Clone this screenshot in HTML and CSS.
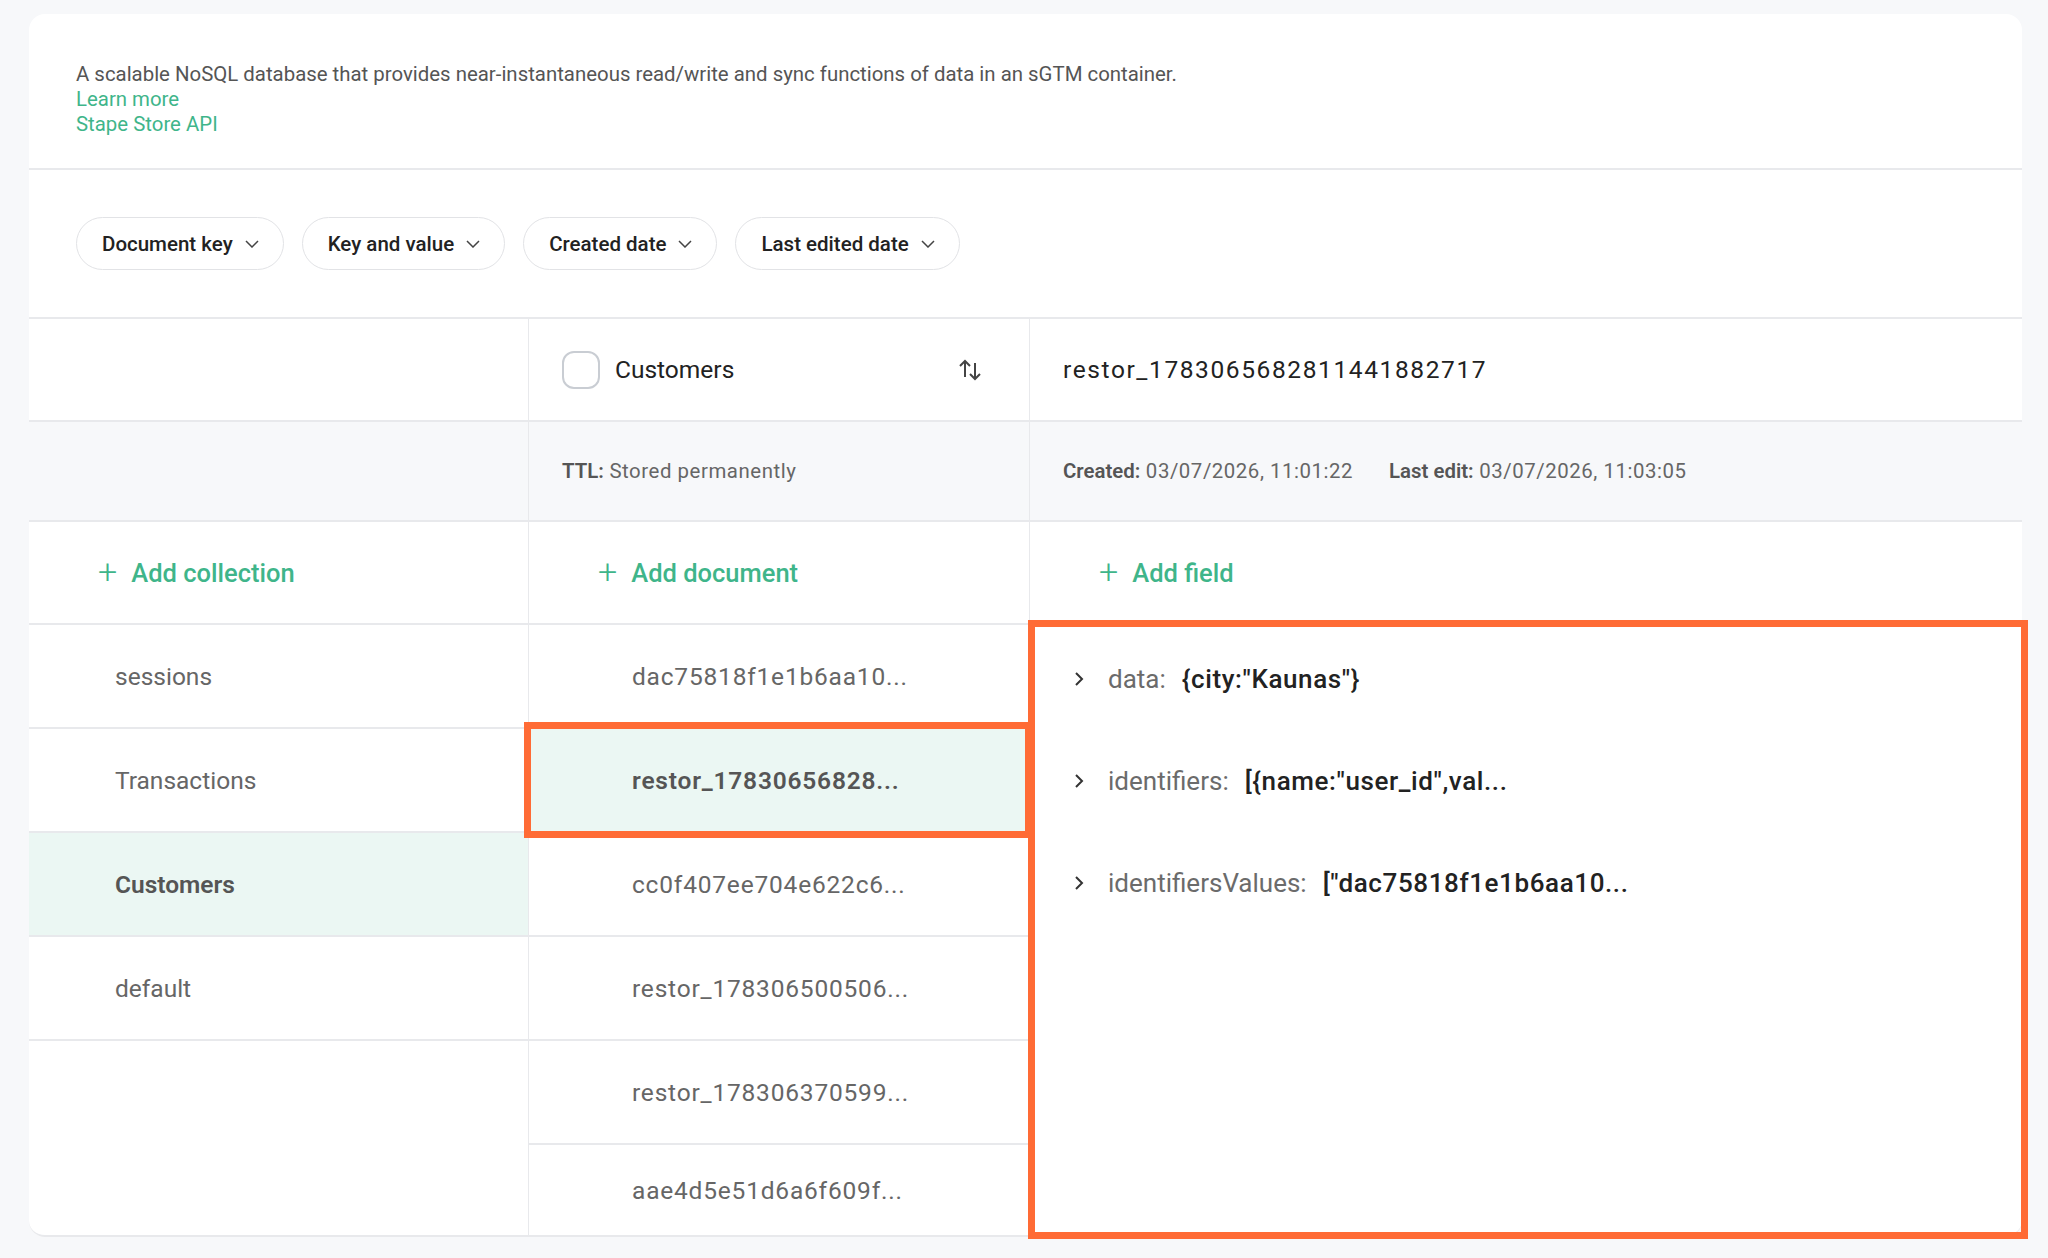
FILE: index.html
```html
<!DOCTYPE html>
<html>
<head>
    <title>Stape Store</title>
    <link rel="stylesheet" href="styles.css">
</head>
<body>
    <div class="card">
        <div class="intro">
            <p>A scalable NoSQL database that provides near-instantaneous read/write and sync functions of data in an sGTM container.</p>
            <a href="#">Learn more</a>
            <a href="#">Stape Store API</a>
        </div>

        <div class="filters">
            <button class="chip">Document key <svg class="caret" viewBox="0 0 14 8"><path d="M1 1l6 6 6-6"/></svg></button>
            <button class="chip">Key and value <svg class="caret" viewBox="0 0 14 8"><path d="M1 1l6 6 6-6"/></svg></button>
            <button class="chip">Created date <svg class="caret" viewBox="0 0 14 8"><path d="M1 1l6 6 6-6"/></svg></button>
            <button class="chip">Last edited date <svg class="caret" viewBox="0 0 14 8"><path d="M1 1l6 6 6-6"/></svg></button>
        </div>

        <div class="store">
            <div class="row head">
                <div class="cell"></div>
                <div class="cell">
                    <span class="check"></span>
                    <span class="coll-name">Customers</span>
                    <svg class="sort" viewBox="0 0 26 26"><path d="M8 20V4M3 9l5-5 5 5M18 6v16M13 17l5 5 5-5"/></svg>
                </div>
                <div class="cell doc-key">restor_1783065682811441882717</div>
            </div>

            <div class="row meta">
                <div class="cell"></div>
                <div class="cell"><b>TTL:</b>&nbsp;Stored permanently</div>
                <div class="cell"><b>Created:</b>&nbsp;03/07/2026, 11:01:22 <b class="gap">Last edit:</b>&nbsp;03/07/2026, 11:03:05</div>
            </div>

            <div class="row add">
                <div class="cell"><a href="#" class="add-link"><span class="plus">+</span>Add collection</a></div>
                <div class="cell"><a href="#" class="add-link"><span class="plus">+</span>Add document</a></div>
                <div class="cell"><a href="#" class="add-link"><span class="plus">+</span>Add field</a></div>
            </div>

            <div class="body">
                <ul class="list collections">
                    <li>sessions</li>
                    <li>Transactions</li>
                    <li class="active">Customers</li>
                    <li>default</li>
                </ul>
                <ul class="list documents">
                    <li>dac75818f1e1b6aa10...</li>
                    <li class="active">restor_17830656828...</li>
                    <li>cc0f407ee704e622c6...</li>
                    <li>restor_178306500506...</li>
                    <li>restor_178306370599...</li>
                    <li class="last">aae4d5e51d6a6f609f...</li>
                </ul>
                <ul class="fields">
                    <li><svg class="toggle" viewBox="0 0 10 16"><path d="M2 2l6 6-6 6"/></svg><span class="key">data:</span><span class="val">{city:"Kaunas"}</span></li>
                    <li><svg class="toggle" viewBox="0 0 10 16"><path d="M2 2l6 6-6 6"/></svg><span class="key">identifiers:</span><span class="val">[{name:"user_id",val...</span></li>
                    <li><svg class="toggle" viewBox="0 0 10 16"><path d="M2 2l6 6-6 6"/></svg><span class="key">identifiersValues:</span><span class="val">["dac75818f1e1b6aa10...</span></li>
                </ul>
            </div>

            <!-- highlight frames -->
            <div class="mark mark-doc"></div>
            <div class="mark mark-fields"></div>
        </div>
    </div>
</body>
</html>
```

FILE: styles.css
```css
body {
    margin: 0;
    padding: 14px 26px 25px 29px;
    background: #f7f8fa;
    font-family: Roboto, "Liberation Sans", sans-serif;
    color: #333;
}
.card {
    width: 1993px;
    background: #fff;
    border-radius: 16px;
}
.intro {
    padding: 48px 47px 31px;
    border-bottom: 2px solid #e8e9ec;
    font-size: 20.4px;
    line-height: 25px;
}
.intro p {
    margin: 0;
    color: #555;
}
.intro a {
    display: block;
    color: #3fb58a;
    text-decoration: none;
}
.filters {
    display: flex;
    gap: 18px;
    padding: 47px 47px 47px;
    border-bottom: 2px solid #e8e9ec;
}
.chip {
    display: flex;
    align-items: center;
    gap: 12px;
    height: 53px;
    padding: 0 24px 0 25px;
    border: 1.5px solid #e2e3e6;
    border-radius: 27px;
    background: #fff;
    font-family: inherit;
    font-size: 20.5px;
    font-weight: 500;
    color: #222;
}
.caret {
    width: 14px;
    height: 8px;
    fill: none;
    stroke: #444;
    stroke-width: 1.5;
}
.store {
    position: relative;
    border-bottom: 2px solid #e8e9ec;
    border-radius: 0 0 16px 16px;
}
.row {
    display: grid;
    grid-template-columns: 500px 501px 1fr;
    border-bottom: 2px solid #e8e9ec;
}
.row .cell {
    display: flex;
    align-items: center;
    padding-left: 33px;
    border-right: 1px solid #e8e9ec;
}
.row .cell:last-child {
    border-right: none;
}
.head .cell {
    height: 101px;
    font-size: 24.5px;
    color: #222;
}
.doc-key {
    letter-spacing: 1.6px;
}
.check {
    width: 34px;
    height: 34px;
    border: 2px solid #c9cdd3;
    border-radius: 12px;
    margin-right: 15px;
}
.sort {
    width: 26px;
    height: 26px;
    margin-left: auto;
    margin-right: 46px;
    fill: none;
    stroke: #444;
    stroke-width: 2;
}
.meta {
    background: #f7f8fa;
}
.meta .cell {
    height: 98px;
    font-size: 20.4px;
    color: #666;
    letter-spacing: 0.55px;
}
.meta b {
    font-weight: 600;
    color: #555;
    letter-spacing: 0;
}
.meta .gap {
    margin-left: 36px;
}
.add .cell {
    height: 101px;
    padding-left: 69px;
}
.add-link {
    display: flex;
    align-items: center;
    font-size: 25.5px;
    font-weight: 500;
    color: #3fb58a;
    text-decoration: none;
}
.plus {
    font-size: 34px;
    font-weight: 300;
    margin-right: 14px;
    margin-top: -3px;
}
.body {
    display: grid;
    grid-template-columns: 500px 501px 1fr;
}
.list {
    margin: 0;
    padding: 0;
    list-style: none;
    border-right: 1px solid #e8e9ec;
}
.list li {
    display: flex;
    align-items: center;
    height: 102px;
    border-bottom: 2px solid #e8e9ec;
    font-size: 24.5px;
    color: #666;
}
.collections li {
    padding-left: 86px;
}
.documents li {
    padding-left: 103px;
    letter-spacing: 0.8px;
}
.documents li.last {
    height: 90px;
    border-bottom: none;
}
.list li.active {
    background: #ebf7f3;
    font-weight: 600;
    color: #555;
}
.fields {
    margin: 0;
    padding: 3px 0 0 44px;
    list-style: none;
}
.fields li {
    display: flex;
    align-items: center;
    height: 102px;
    font-size: 26px;
}
.toggle {
    width: 10px;
    height: 16px;
    margin-right: 24px;
    fill: none;
    stroke: #333;
    stroke-width: 2;
}
.fields .key {
    color: #6b6b6b;
    margin-right: 16px;
}
.fields .val {
    color: #222;
    font-weight: 500;
    letter-spacing: 0.6px;
}
.mark {
    position: absolute;
    border: 7px solid #ff6b35;
}
.mark-doc {
    left: 495px;
    top: 403px;
    width: 494px;
    height: 102px;
}
.mark-fields {
    left: 999px;
    top: 301px;
    width: 986px;
    height: 605px;
}
```
